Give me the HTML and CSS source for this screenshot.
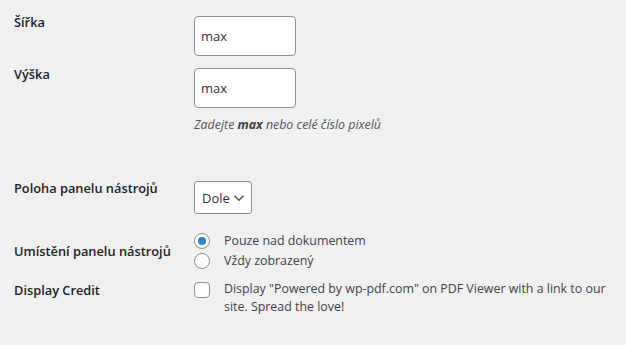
FILE: index.html
```html
<!DOCTYPE html>
<html lang="cs">
<head>
  <meta charset="UTF-8" />
  <title>Nastavení PDF Viewer</title>
  <link rel="stylesheet" href="styles.css">
</head>
<body>

<form class="form-table">
  <div class="row row-width">
    <div class="label">Šířka</div>
    <div class="field">
      <input type="text" class="text-input" value="max" />
    </div>
  </div>

  <div class="row row-height">
    <div class="label">Výška</div>
    <div class="field">
      <input type="text" class="text-input" value="max" />
      <p class="description">Zadejte <strong>max</strong> nebo celé číslo pixelů</p>
    </div>
  </div>

  <div class="row row-toolbar">
    <div class="label">Poloha panelu nástrojů</div>
    <div class="field">
      <div class="select">
        Dole
        <svg width="12" height="8" viewBox="0 0 12 8"><path d="M1.5 1.8 6 6.2 10.5 1.8" fill="none" stroke="#50575e" stroke-width="1.6"/></svg>
      </div>
    </div>
  </div>

  <div class="row row-placement">
    <div class="label">Umístění panelu nástrojů</div>
    <div class="field options">
      <label class="option"><span class="radio checked"></span>Pouze nad dokumentem</label>
      <label class="option"><span class="radio"></span>Vždy zobrazený</label>
    </div>
  </div>

  <div class="row row-credit">
    <div class="label">Display Credit</div>
    <div class="field">
      <label class="check-option">
        <span class="checkbox"></span>
        <span>Display "Powered by wp-pdf.com" on PDF Viewer with a link to our site. Spread the love!</span>
      </label>
    </div>
  </div>
</form>

</body>
</html>
```

FILE: styles.css
```css
html, body {
  margin: 0;
  padding: 0;
  background: #f0f0f1;
  color: #3c434a;
  font-family: "Open Sans", "Noto Sans", sans-serif;
  font-size: 12.4px;
}

.form-table {
  padding: 12px 14px 0;
}

.row {
  display: grid;
  grid-template-columns: 180px 1fr;
  align-items: start;
}

.label {
  color: #1d2327;
  font-weight: 600;
  font-size: 12.8px;
  line-height: 20px;
}

/* text fields */
.text-input {
  display: block;
  box-sizing: border-box;
  width: 102px;
  height: 40px;
  margin: 4px 0 0;
  padding: 0 6px;
  border: 1px solid #8c8f94;
  border-radius: 4px;
  background: #fff;
  color: #2c3338;
  font: inherit;
  font-size: 13px;
}

.row-height {
  margin-top: 8px;
}

.description {
  margin: 7px 0 0;
  font-style: italic;
  color: #50575e;
  line-height: 20px;
}

.description strong {
  color: #3c434a;
}

/* select */
.row-toolbar {
  margin-top: 43px;
}

.select {
  display: inline-flex;
  align-items: center;
  gap: 3px;
  box-sizing: border-box;
  height: 33px;
  margin-top: 3px;
  padding: 0 6px 0 7px;
  border: 1px solid #8c8f94;
  border-radius: 3px;
  background: #fff;
  color: #2c3338;
  font-size: 13px;
}

/* radios */
.row-placement {
  margin-top: 17px;
  align-items: center;
}

.options {
  display: flex;
  flex-direction: column;
}

.option {
  display: flex;
  align-items: center;
  line-height: 20px;
}

.radio {
  box-sizing: border-box;
  width: 16px;
  height: 16px;
  margin-right: 14px;
  border: 1px solid #8c8f94;
  border-radius: 50%;
  background: #fff;
  display: inline-flex;
  align-items: center;
  justify-content: center;
}

.radio.checked::after {
  content: "";
  width: 8px;
  height: 8px;
  border-radius: 50%;
  background: #2a86cc;
}

/* checkbox */
.row-credit {
  margin-top: 9px;
}

.check-option {
  display: flex;
  align-items: flex-start;
  line-height: 18px;
}

.checkbox {
  flex: none;
  box-sizing: border-box;
  width: 16px;
  height: 16px;
  margin: 2px 14px 0 0;
  border: 1px solid #8c8f94;
  border-radius: 4px;
  background: #fff;
}
```
